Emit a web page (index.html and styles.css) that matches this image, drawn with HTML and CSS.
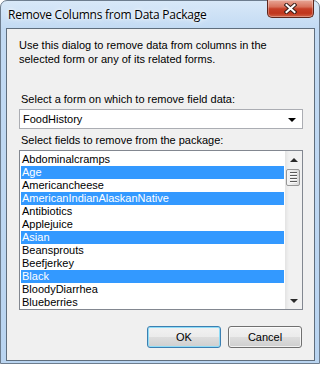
FILE: index.html
```html
<!DOCTYPE html>
<html lang="en">
    <head>
        <title>Remove Columns from Data Package</title>
        <link rel="stylesheet" href="styles.css">
    </head>
    <body>
        <div class="window">
            <!-- Title bar -->
            <div class="titlebar">
                <span class="title">Remove Columns from Data Package</span>
                <button class="close-button">
                    <svg width="13" height="11" viewBox="0 0 13 11">
                        <path d="M2.5 2 L10.5 9 M10.5 2 L2.5 9" stroke="#3b1f1a" stroke-width="4" stroke-linecap="square"/>
                        <path d="M2.5 2 L10.5 9 M10.5 2 L2.5 9" stroke="#ffffff" stroke-width="2" stroke-linecap="square"/>
                    </svg>
                </button>
            </div>

            <!-- Client area -->
            <div class="client">
                <p class="intro">Use this dialog to remove data from columns in the<br>selected form or any of its related forms.</p>

                <label class="field-label label-form">Select a form on which to remove field data:</label>
                <div class="combo">
                    <span class="combo-text">FoodHistory</span>
                    <span class="combo-arrow"></span>
                </div>

                <label class="field-label label-fields">Select fields to remove from the package:</label>
                <div class="listbox">
                    <ul class="items">
                        <li>Abdominalcramps</li>
                        <li class="selected">Age</li>
                        <li>Americancheese</li>
                        <li class="selected">AmericanIndianAlaskanNative</li>
                        <li>Antibiotics</li>
                        <li>Applejuice</li>
                        <li class="selected">Asian</li>
                        <li>Beansprouts</li>
                        <li>Beefjerkey</li>
                        <li class="selected">Black</li>
                        <li>BloodyDiarrhea</li>
                        <li>Blueberries</li>
                    </ul>
                    <div class="scrollbar">
                        <div class="scroll-button"><span class="arrow-up"></span></div>
                        <div class="thumb">
                            <span class="grip"></span>
                            <span class="grip"></span>
                            <span class="grip"></span>
                            <span class="grip"></span>
                        </div>
                        <div class="track"></div>
                        <div class="scroll-button"><span class="arrow-down"></span></div>
                    </div>
                </div>

                <div class="actions">
                    <button class="btn btn-default">OK</button>
                    <button class="btn">Cancel</button>
                </div>
            </div>
        </div>
    </body>
</html>
```

FILE: styles.css
```css
/* Page */
body {
    margin: 0;
    background-color: #ffffff;
    font-family: "Liberation Sans", Arial, sans-serif;
    font-size: 11px;
    color: #000;
}

/* Aero window frame */
.window {
    width: 320px;
    height: 364px;
    box-sizing: border-box;
    border: 1px solid #6d7d8e;
    border-radius: 7px 7px 0 0;
    background: linear-gradient(to bottom, #d8e8f8 0px, #c2daf3 28px, #b9d4f0 100%);
    display: flex;
    flex-direction: column;
    padding-left: 5px;
}

/* Title bar */
.titlebar {
    height: 27px;
    display: flex;
    justify-content: space-between;
    align-items: flex-start;
}

.title {
    font-family: "Open Sans", "Noto Sans", sans-serif;
    font-size: 12px;
    letter-spacing: -0.25px;
    padding: 5px 0 0 2px;
    text-shadow: 0 0 6px #ffffff, 0 0 3px #ffffff;
}

.close-button {
    width: 47px;
    height: 18px;
    margin: -1px 5px 0 0;
    padding: 0;
    border: 1px solid #5e261c;
    border-top: none;
    border-radius: 0 0 5px 5px;
    background: linear-gradient(to bottom, #e8a797 0%, #d8725c 40%, #c63f27 52%, #c0361d 78%, #d06246 100%);
    box-shadow: inset 0 0 0 1px rgba(255, 255, 255, 0.3);
    display: flex;
    align-items: center;
    justify-content: center;
}

/* Client area */
.client {
    width: 309px;
    height: 333px;
    box-sizing: border-box;
    border: 1px solid #5f6e7d;
    background-color: #f0f0f0;
    padding: 9px 0 0 12px;
    display: flex;
    flex-direction: column;
}

.intro {
    margin: 0;
    line-height: 14px;
}

.field-label {
    display: block;
    line-height: 14px;
    padding-left: 2px;
}

.label-form {
    margin-top: 26px;
}

.label-fields {
    margin-top: 4px;
}

/* Combo box */
.combo {
    width: 284px;
    height: 20px;
    box-sizing: border-box;
    margin-top: 3px;
    border: 1px solid #abadb3;
    background-color: #fff;
    display: flex;
    align-items: center;
    justify-content: space-between;
    padding: 0 6px 0 3px;
}

.combo-arrow {
    width: 0;
    height: 0;
    border-left: 4px solid transparent;
    border-right: 4px solid transparent;
    border-top: 4px solid #000;
    margin-top: 1px;
}

/* List box */
.listbox {
    width: 284px;
    height: 160px;
    box-sizing: border-box;
    margin-top: 3px;
    border: 1px solid #828790;
    background-color: #fff;
    display: flex;
}

.items {
    flex: 1;
    list-style: none;
    margin: 0;
    padding: 2px 1px 0 1px;
}

.items li {
    height: 13px;
    line-height: 13px;
    padding-left: 1px;
    white-space: nowrap;
}

.items li.selected {
    background-color: #3399ff;
    color: #fff;
}

/* Scroll bar */
.scrollbar {
    width: 17px;
    display: flex;
    flex-direction: column;
    background: linear-gradient(to right, #e3e3e3 0px, #f1f1f1 4px, #f1f1f1 100%);
}

.scroll-button {
    height: 17px;
    display: flex;
    align-items: center;
    justify-content: center;
}

.arrow-up {
    width: 0;
    height: 0;
    border-left: 4px solid transparent;
    border-right: 4px solid transparent;
    border-bottom: 4px solid #2a2a2a;
}

.arrow-down {
    width: 0;
    height: 0;
    border-left: 4px solid transparent;
    border-right: 4px solid transparent;
    border-top: 4px solid #2a2a2a;
}

.thumb {
    height: 17px;
    margin: 1px 2px 0 1px;
    box-sizing: border-box;
    border: 1px solid #979797;
    border-radius: 2px;
    background: linear-gradient(to right, #f6f6f6, #e6e6e6 60%, #d8d8d8);
    display: flex;
    flex-direction: column;
    align-items: center;
    justify-content: center;
    gap: 1px;
}

.grip {
    width: 7px;
    height: 1px;
    background-color: #5a5a5a;
    border-bottom: 1px solid #fafafa;
}

.track {
    flex: 1;
}

/* Buttons */
.actions {
    width: 283px;
    margin-top: 16px;
    display: flex;
    justify-content: flex-end;
    gap: 7px;
}

.btn {
    width: 74px;
    height: 22px;
    padding: 0;
    border: 1px solid #707070;
    border-radius: 3px;
    background: linear-gradient(to bottom, #f2f2f2 0%, #ebebeb 50%, #dddddd 51%, #cfcfcf 100%);
    box-shadow: inset 0 0 0 1px rgba(255, 255, 255, 0.7);
    font-family: "Liberation Sans", Arial, sans-serif;
    font-size: 11px;
    color: #000;
}

.btn-default {
    border-color: #3c7fb1;
    box-shadow: inset 0 0 0 1px #8fdcf7;
}
```
